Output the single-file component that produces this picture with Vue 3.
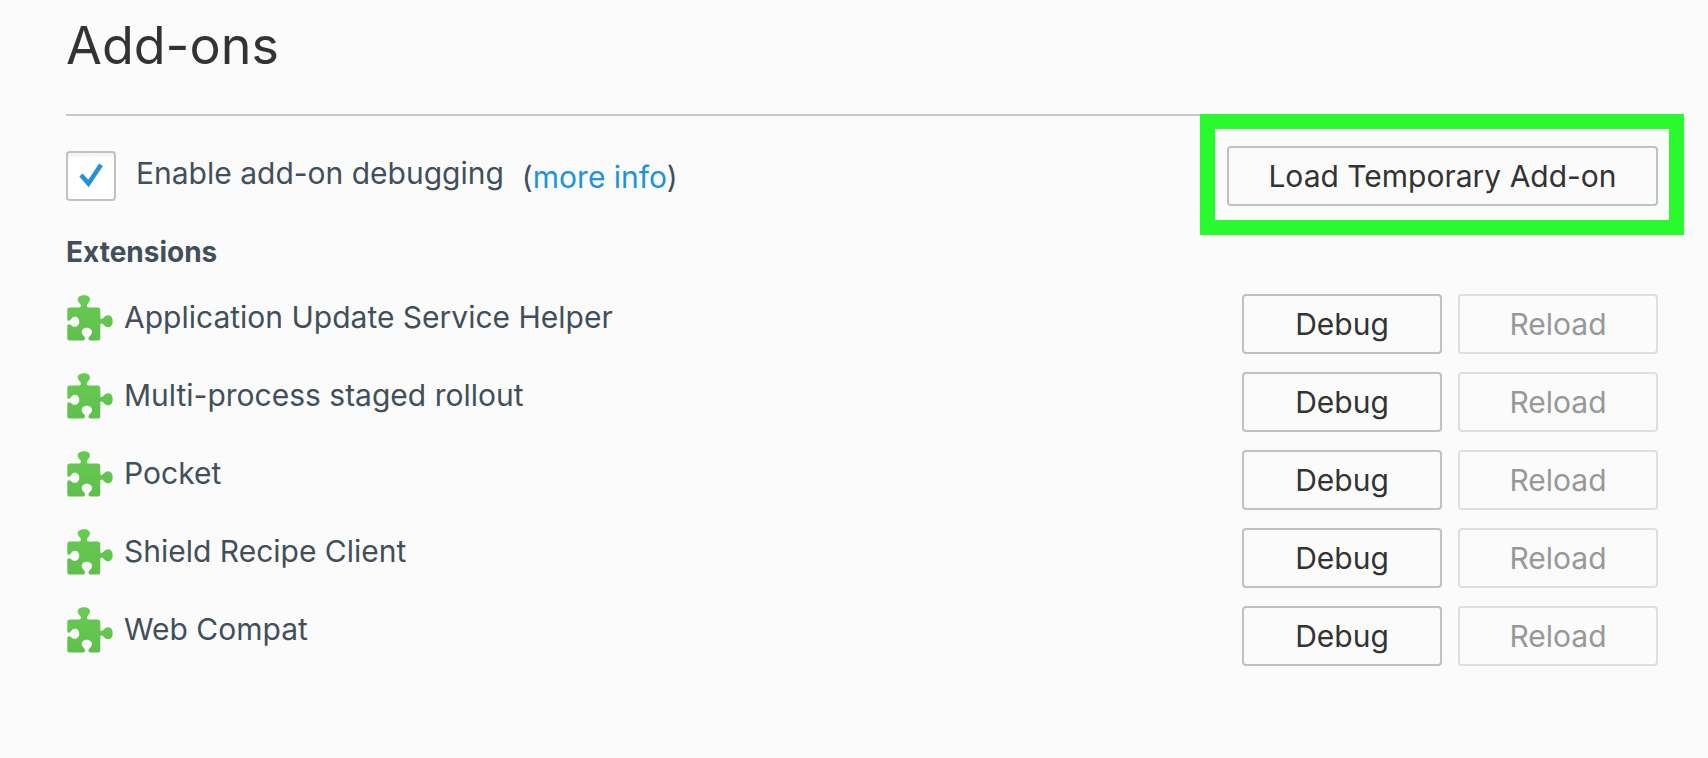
<script setup>
import { ref } from 'vue'

const debugging = ref(true)
const extensions = [
  'Application Update Service Helper',
  'Multi-process staged rollout',
  'Pocket',
  'Shield Recipe Client',
  'Web Compat',
]
</script>

<template>
  <main class="page">
    <h1 class="title">Add-ons</h1>

    <div class="controls">
      <div class="option">
        <span class="box">
          <input id="enable-debugging" v-model="debugging" type="checkbox" class="check" />
          <svg v-if="debugging" class="tick" viewBox="0 0 50 50" aria-hidden="true">
            <path d="M15 24 L22.500 32.500 L35 13.700" fill="none" stroke="#2292d4" stroke-width="4.500" />
          </svg>
        </span>
        <label for="enable-debugging" class="option-label">Enable add-on debugging</label>
        <span class="more">(<a href="#more-info">more info</a>)</span>
      </div>
      <div class="load">
        <button type="button" class="btn btn-load">Load Temporary Add-on</button>
        <span class="highlight"></span>
      </div>
    </div>

    <h2 class="subtitle">Extensions</h2>

    <svg class="defs" width="0" height="0" aria-hidden="true">
      <defs>
        <linearGradient id="leaf" x1="0" y1="0" x2="0" y2="1">
          <stop offset="0" stop-color="#66cc52" />
          <stop offset="1" stop-color="#60bf4c" />
        </linearGradient>
      </defs>
    </svg>

    <ul class="list">
      <li v-for="name in extensions" :key="name" class="row">
        <svg class="icon" viewBox="0 0 48 48" aria-hidden="true">
          <path
            fill="url(#leaf)"
            d="M4 13.500 H13 C15 13.500 15.500 11.500 14.300 10 C13 8.500 11.700 7.300 11.700 5.500 C11.700 3 14 1.300 17.900 1.300 C21.800 1.300 24 3 24 5.500 C24 7.300 22.700 8.500 21.500 10 C20.300 11.500 20.700 13.500 22.800 13.500 H31.500 C33.500 13.500 34.300 14.300 34.300 16.300 V23.500 C34.300 25.500 36 25.500 37.300 24 C39 22 40.300 21.200 42 21.200 C45 21.200 46.700 23.700 46.700 27.200 C46.700 30.700 45 33.200 42 33.200 C40.300 33.200 39 32.400 37.300 30.500 C36 29 34.300 29 34.300 31 V43.700 C34.300 45.700 33.500 46.500 31.500 46.500 H25 C22.500 46.500 22 44.500 23 43 C24.300 41.300 26 40.300 26 38 C26 35.300 23.700 33.700 20.800 33.700 C18 33.700 15.700 35.300 15.700 38 C15.700 40.300 17.300 41.300 18.600 43 C19.500 44.500 19 46.500 16.500 46.500 H4 C2 46.500 1.300 45.700 1.300 43.700 V32.500 C1.300 30.200 3.300 29.500 4.800 31 C6.200 32.400 7.300 32.800 8.800 32.800 C11.500 32.800 13.300 30.700 13.300 27.800 C13.300 24.900 11.500 22.800 8.800 22.800 C7.300 22.800 6.200 23.500 4.800 25.500 C3.500 27.200 1.300 27.300 1.300 25 V16.300 C1.300 14.300 2 13.500 4 13.500 Z"
          />
        </svg>
        <span class="name">{{ name }}</span>
        <button type="button" class="btn">Debug</button>
        <button type="button" class="btn" disabled>Reload</button>
      </li>
    </ul>
  </main>
</template>

<style>
body {
  background: #fbfbfb;
}
</style>

<style scoped>
.page {
  padding: 14px 50px 92px 66px;
  color: #424f5a;
  font-family: Inter, "Liberation Sans", sans-serif;
  font-size: 30px;
  line-height: 36px;
}

.title {
  margin: 0;
  padding-bottom: 36px;
  border-bottom: 2px solid #c8c8c8;
  color: #333;
  font-size: 52px;
  font-weight: 400;
  line-height: 64px;
}

.controls {
  display: flex;
  justify-content: space-between;
  align-items: flex-start;
  padding-top: 30px;
}

.option {
  display: flex;
  align-items: flex-start;
  padding-top: 5px;
}

.box {
  position: relative;
  flex: none;
  width: 50px;
  height: 50px;
}

.check {
  appearance: none;
  display: block;
  box-sizing: border-box;
  width: 100%;
  height: 100%;
  margin: 0;
  border: 2px solid #c1c1c1;
  border-radius: 4px;
  background: #fff;
  box-shadow: inset 0 4px #f5f5f5;
}

.tick {
  position: absolute;
  inset: 0;
  pointer-events: none;
}

.option-label {
  margin: 4px 18px 0 20px;
}

.more {
  margin-top: 8px;
}

.more a {
  color: #1a94e0;
  text-decoration: none;
}

.load {
  position: relative;
  flex: none;
}

.highlight {
  position: absolute;
  inset: -32px -26px -29px -27px;
  border: 15px solid #29fa2e;
  pointer-events: none;
}

.btn {
  flex: none;
  box-sizing: border-box;
  width: 200px;
  height: 60px;
  margin: 0;
  padding: 0;
  border: 2px solid #c1c1c1;
  border-radius: 4px;
  background: #fbfbfb;
  color: #333;
  font: inherit;
}

.btn:disabled {
  border-color: #dfdfdf;
  color: #989898;
}

.btn-load {
  display: block;
  width: 431px;
}

.subtitle {
  margin: 28px 0 0;
  font-size: 28px;
  font-weight: 700;
  line-height: 36px;
}

.defs {
  position: absolute;
}

.list {
  display: flex;
  flex-direction: column;
  gap: 18px;
  margin: 24px 0 0;
  padding: 0;
  list-style: none;
}

.row {
  display: flex;
  align-items: flex-start;
  gap: 16px;
}

.icon {
  flex: none;
  width: 48px;
  height: 48px;
  margin-right: -6px;
}

.name {
  flex: 1;
  padding-top: 5px;
}
</style>
